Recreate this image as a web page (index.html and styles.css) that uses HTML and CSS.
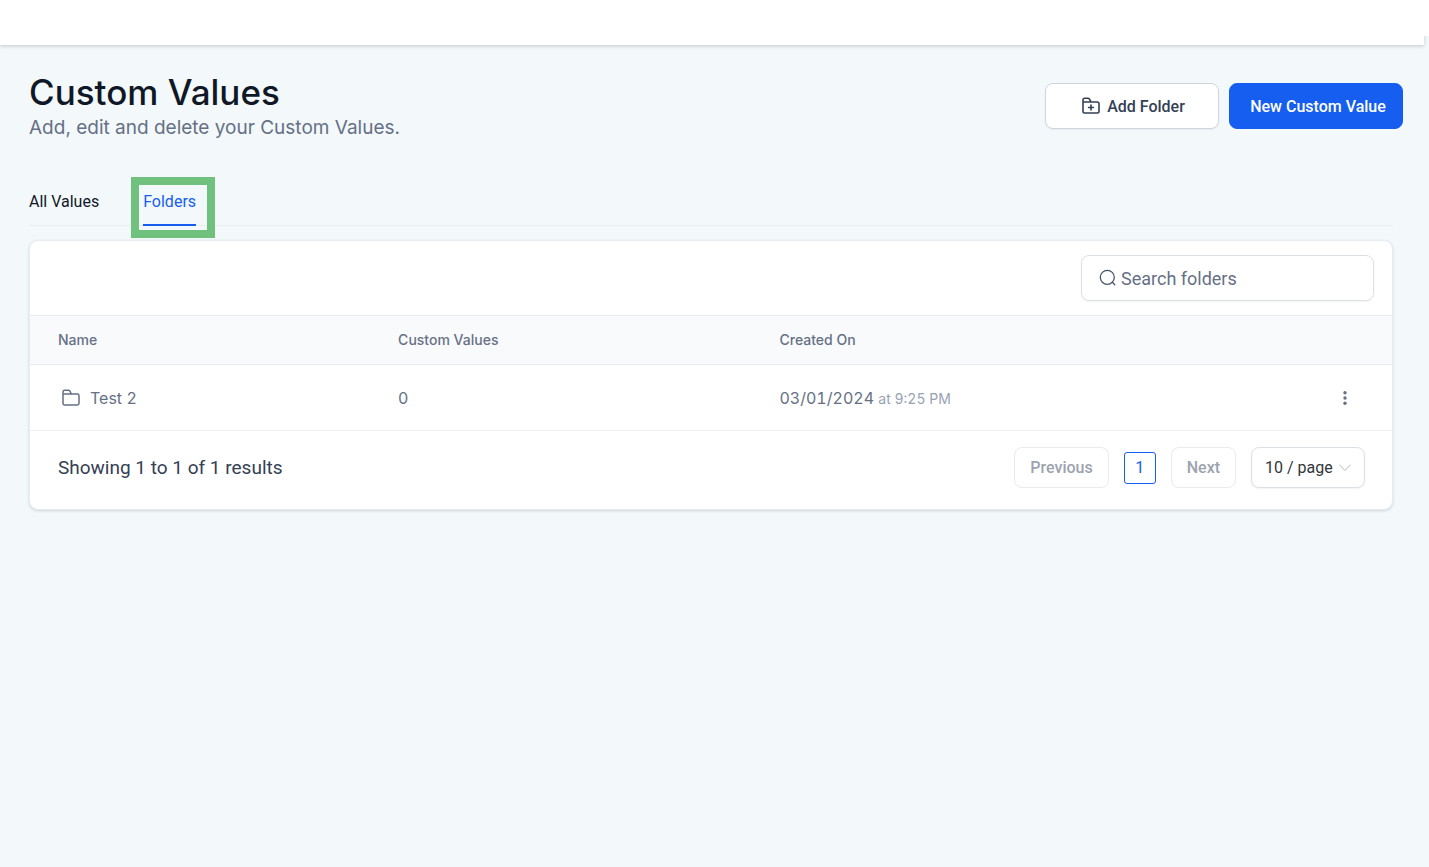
FILE: index.html
```html
<!DOCTYPE html>
<html lang="en">
<head>
<meta charset="utf-8">
<title>Custom Values</title>
<link rel="stylesheet" href="styles.css">
</head>
<body>
<div class="top">
  <header class="topbar"></header>
  <div class="gutter"></div>
</div>
<main class="page">
  <div class="heading">
    <div>
      <h1 class="title">Custom Values</h1>
      <p class="subtitle">Add, edit and delete your Custom Values.</p>
    </div>
    <div class="actions">
      <button class="btn btn-light" type="button">
        <svg class="icon" width="20" height="20" viewBox="0 0 20 20" fill="none" stroke="currentColor" stroke-width="1.6" stroke-linejoin="round" stroke-linecap="round"><path d="M2 6V4Q2 2.300 3.700 2.300H7Q8 2.300 8.500 3.200L10 6M2 6H16.300Q18 6 18 7.700V15.300Q18 17 16.300 17H3.700Q2 17 2 15.300ZM10 9.100V13.900M7.600 11.500H12.400"/></svg>
        Add Folder
      </button>
      <button class="btn btn-primary" type="button">New Custom Value</button>
    </div>
  </div>
  <nav class="tabs">
    <a class="tab" href="#all">All Values</a>
    <a class="tab active" href="#folders">Folders</a>
  </nav>
  <section class="card">
    <div class="toolbar">
      <label class="search">
        <svg width="18" height="18" viewBox="0 0 18 18" fill="none" stroke="currentColor" stroke-width="1.300" stroke-linecap="round"><circle cx="8.300" cy="8.300" r="7"/><path d="M13.300 13.300L15.800 15.700"/></svg>
        <input type="search" placeholder="Search folders" aria-label="Search folders">
      </label>
    </div>
    <table class="table">
      <colgroup><col class="col-name"><col class="col-count"><col class="col-date"><col class="col-menu"></colgroup>
      <thead>
        <tr><th>Name</th><th>Custom Values</th><th>Created On</th><th></th></tr>
      </thead>
      <tbody>
        <tr>
          <td><span class="folder"><svg width="20" height="20" viewBox="0 0 20 20" fill="none" stroke="currentColor" stroke-width="1.500" stroke-linejoin="round"><path d="M2 6V4Q2 2.300 3.700 2.300H7.400Q8.400 2.300 8.900 3.200L10.300 6M2 6H16.300Q18 6 18 7.700V15.300Q18 17 16.300 17H3.700Q2 17 2 15.300Z"/></svg>Test 2</span></td>
          <td>0</td>
          <td>03/01/2024 <span class="time">at 9:25 PM</span></td>
          <td class="menu-cell"><button class="menu" type="button" aria-label="Folder actions"><svg width="20" height="20" viewBox="0 0 20 20" fill="currentColor"><circle cx="10" cy="4.700" r="1.700"/><circle cx="10" cy="10" r="1.700"/><circle cx="10" cy="15.300" r="1.700"/></svg></button></td>
        </tr>
      </tbody>
    </table>
    <footer class="footer">
      <p class="summary">Showing 1 to 1 of 1 results</p>
      <div class="pager">
        <button class="step" type="button" disabled>Previous</button>
        <button class="current" type="button" aria-current="page">1</button>
        <button class="step" type="button" disabled>Next</button>
        <div class="size">
          <select aria-label="Results per page"><option>10 / page</option></select>
          <svg class="chevron" width="12" height="8" viewBox="0 0 12 8" fill="none" stroke="currentColor" stroke-linecap="round"><path d="M.7 1L6 6.500L11.300 1"/></svg>
        </div>
      </div>
    </footer>
  </section>
</main>
</body>
</html>
```
FILE: styles.css
```css
* { box-sizing: border-box; }
body {
  margin: 0;
  min-height: 100vh;
  background: #f3f8fb;
  color: #667085;
  font-family: Inter, sans-serif;
  font-size: 16px;
}
h1, p { margin: 0; }
button, input, select { font-family: inherit; }
svg { flex: none; display: block; }

.top { display: flex; align-items: flex-start; }
.topbar { flex: 1; height: 45px; background: #fff; box-shadow: 0 1px 4px rgba(0, 0, 0, .2); }
.gutter { width: 5px; height: 36px; background: #fff; z-index: 1; }

.page { padding: 27px 36px 0 29px; }
.heading { display: flex; justify-content: space-between; align-items: flex-start; margin-right: -10px; }
.title { font-size: 35px; line-height: 40px; font-weight: 500; color: #101828; }
.subtitle { font-size: 19px; line-height: 32px; }
.actions { display: flex; gap: 10px; margin-top: 11px; }
.btn {
  display: flex;
  align-items: center;
  justify-content: center;
  gap: 6px;
  width: 174px;
  height: 46px;
  border-radius: 8px;
  font: 500 16px Roboto, sans-serif;
}
.btn-light { background: #fff; border: 1px solid #d0d5dd; color: #344054; padding-left: 8px; box-shadow: 0 1px 2px rgba(16, 24, 40, .05); }
.btn-primary { background: #155eef; border: 1px solid #155eef; color: #fff; padding-left: 10px; }

.tabs { display: flex; gap: 44px; margin-top: 44px; border-bottom: 1px solid #e9edf1; }
.tab { position: relative; padding: 1px 0 9px; color: #101828; font: 16px/26px Roboto, sans-serif; text-decoration: none; border-bottom: 2px solid transparent; margin-bottom: -1px; }
.tab.active { color: #155eef; border-color: #155eef; }
.tab.active::after { content: ""; position: absolute; inset: -11px -19px -14px -12px; border: 8px solid #70c17d; }

.card { margin-top: 14px; background: #fff; border-radius: 9px; border: 1px solid #e7ecf0; box-shadow: 0 1px 3px rgba(16, 24, 40, .16); }
.toolbar { display: flex; justify-content: flex-end; padding: 14px 18px; }
.search {
  display: flex;
  align-items: center;
  gap: 4px;
  width: 293px;
  height: 46px;
  padding: 0 17px;
  border: 1px solid #dcdfe6;
  border-radius: 8px;
  box-shadow: 0 1px 2px rgba(16, 24, 40, .05);
  color: #475467;
}
.search input { flex: 1; min-width: 0; padding: 0; border: 0; outline: 0; background: none; font: 18px Roboto, sans-serif; }
.search input::placeholder { color: #667085; opacity: 1; }

.table { width: 100%; border-collapse: collapse; table-layout: fixed; }
.col-name { width: 26%; }
.col-count { width: 28%; }
.col-date { width: 38%; }
.table th { height: 49px; padding: 0 14px 2px; background: #f9fafc; border: solid #e6ebf0; border-width: 1px 0; font-size: 14px; font-weight: 500; text-align: left; }
.table td { height: 66px; padding: 0 14px; border-bottom: 1px solid #edf0f3; font-variant-numeric: tabular-nums; }
.table th:first-child, .table td:first-child { padding-left: 28px; }
.folder { display: flex; align-items: center; gap: 9px; padding-left: 3px; }
.time { font-size: 14px; color: #98a2b3; }
.table .menu-cell { padding: 0 37px 0 0; }
.menu { display: block; margin-left: auto; padding: 0; border: 0; background: none; color: #667085; }

.footer { display: flex; justify-content: space-between; align-items: center; padding: 16px 27px 21px 28px; }
.summary { font: 19px/24px Roboto, sans-serif; color: #344054; }
.pager { display: flex; align-items: center; gap: 15px; }
.pager button, .pager select { background: #fff; font: 16px Roboto, sans-serif; }
.pager .step { height: 41px; padding: 0 15px; border: 1px solid #e8eaee; border-radius: 8px; color: #9ca3af; font-weight: 500; }
.pager .current { width: 32px; height: 32px; padding: 0; border: 1px solid #155eef; border-radius: 3px; color: #155eef; }
.size { position: relative; }
.pager .size select { appearance: none; display: block; width: 114px; height: 41px; padding: 0 13px; border: 1px solid #dcdfe6; border-radius: 8px; color: #333639; box-shadow: 0 1px 2px rgba(16, 24, 40, .05); }
.chevron { position: absolute; right: 14px; top: 17px; color: #b5bac2; pointer-events: none; }
```
